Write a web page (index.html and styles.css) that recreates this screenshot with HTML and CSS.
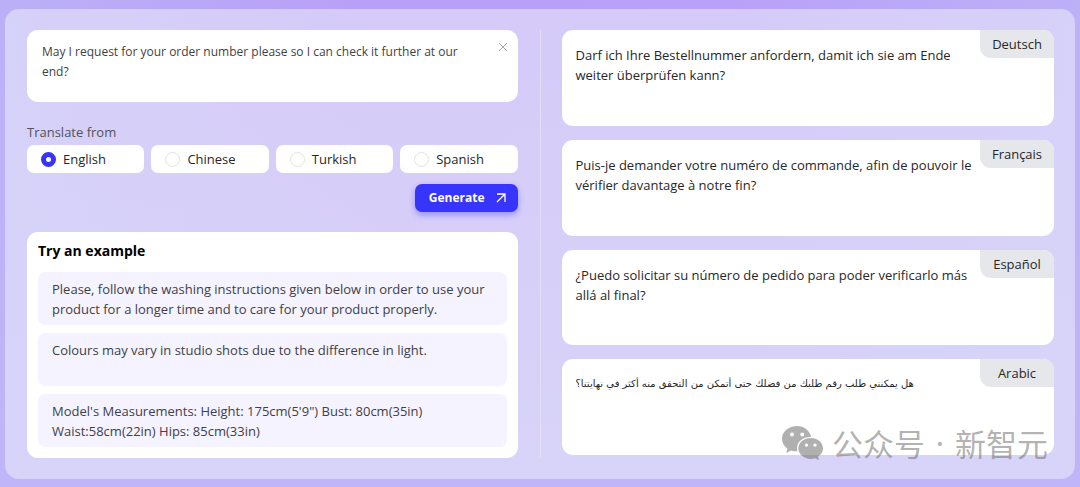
FILE: index.html
```html
<!DOCTYPE html>
<html lang="en">
<head>
<meta charset="utf-8">
<meta name="viewport" content="width=device-width, initial-scale=1">
<title>Translate</title>
<link rel="stylesheet" href="styles.css">
</head>
<body>
<main class="panel">
  <section class="source">
    <div class="prompt">
      <textarea class="prompt-text" aria-label="Text to translate">May I request for your order number please so I can check it further at our end?</textarea>
      <button class="clear" type="button" aria-label="Clear text">
        <svg viewBox="0 0 10 10" width="10" height="10"><path d="M1 1l8 8M9 1L1 9" fill="none" stroke="currentColor"/></svg>
      </button>
    </div>
    <fieldset class="languages">
      <legend>Translate from</legend>
      <div class="options">
        <label class="option"><input type="radio" name="from" checked>English</label>
        <label class="option"><input type="radio" name="from">Chinese</label>
        <label class="option"><input type="radio" name="from">Turkish</label>
        <label class="option"><input type="radio" name="from">Spanish</label>
      </div>
    </fieldset>
    <button class="generate" type="button">Generate
      <svg viewBox="0 0 10 10" width="10" height="10" aria-hidden="true"><path d="M1 1h8v8M9 1L1 9" fill="none" stroke="currentColor" stroke-width="1.3"/></svg>
    </button>
    <div class="examples">
      <h2>Try an example</h2>
      <button class="example" type="button">Please, follow the washing instructions given below in order to use your product for a longer time and to care for your product properly.</button>
      <button class="example" type="button">Colours may vary in studio shots due to the difference in light.</button>
      <button class="example" type="button">Model's Measurements: Height: 175cm(5'9") Bust: 80cm(35in) Waist:58cm(22in) Hips: 85cm(33in)</button>
    </div>
  </section>
  <section class="results">
    <article class="result">
      <p lang="de">Darf ich Ihre Bestellnummer anfordern, damit ich sie am Ende weiter überprüfen kann?</p>
      <span class="tag">Deutsch</span>
    </article>
    <article class="result">
      <p lang="fr">Puis-je demander votre numéro de commande, afin de pouvoir le vérifier davantage à notre fin?</p>
      <span class="tag">Français</span>
    </article>
    <article class="result">
      <p lang="es">¿Puedo solicitar su número de pedido para poder verificarlo más allá al final?</p>
      <span class="tag">Español</span>
    </article>
    <article class="result">
      <p class="arabic" lang="ar"><bdi dir="rtl">هل يمكنني طلب رقم طلبك من فضلك حتى أتمكن من التحقق منه أكثر في نهايتنا؟</bdi></p>
      <span class="tag">Arabic</span>
    </article>
  </section>
  <div class="watermark" lang="zh">
    <svg viewBox="0 0 42 34" width="42" height="34" aria-hidden="true">
      <path fill="currentColor" fill-rule="evenodd" d="M15 0C6.700 0 0 5.700 0 12.800c0 4.100 2.100 7.500 5.500 9.900L4.200 27l5-2.600c2 .6 3.900 1 6.300.9A11 11 0 0 1 15.100 22C15.100 15.700 21 11 28.200 11h1C27.700 4.600 22 0 15 0ZM10 6.600a2 2 0 1 1 0 4a2 2 0 0 1 0-4ZM20.300 6.600a2 2 0 1 1 0 4a2 2 0 0 1 0-4Z"/>
      <path fill="currentColor" fill-rule="evenodd" d="M28.700 12.100c-6.900 0-12.300 4.700-12.300 10.400s5.400 10.400 12.300 10.400c1.500 0 3-.3 4.300-.7l4.200 2-1.200-3.600c3.100-1.900 5-4.900 5-8.100 0-5.700-5.400-10.400-12.300-10.400ZM24.500 17.400a1.700 1.700 0 1 1 0 3.400a1.700 1.700 0 0 1 0-3.400ZM33 17.400a1.700 1.700 0 1 1 0 3.400a1.700 1.700 0 0 1 0-3.400Z"/>
    </svg>
    <span>公众号</span><span class="dot">·</span><span>新智元</span>
  </div>
</main>
</body>
</html>
```
FILE: styles.css
```css
* { box-sizing: border-box; }

body {
  margin: 0;
  min-height: 100vh;
  padding: 9px 5px 8px;
  background: linear-gradient(to bottom, rgba(192, 181, 248, 0) 0%, #c0b5f8 100%),
    linear-gradient(to right, #bbb0f7, #b89ff8 35%, #b9a1f9 68%, #bcb0f7);
  color: #27272a;
  font: 13px/20px "Open Sans", "Noto Sans", sans-serif;
}

button, textarea { font: inherit; color: inherit; border: 0; margin: 0; }
h2, p { margin: 0; }

.panel {
  position: relative;
  display: grid;
  grid-template-columns: 1fr 1fr;
  min-height: calc(100vh - 17px);
  padding: 21px 21px 21px 22px;
  border-radius: 14px;
  background: rgba(236, 235, 247, 0.56);
}

.source {
  display: flex;
  flex-direction: column;
  padding-right: 22px;
  border-right: 1px solid #e5dffc;
}

.prompt {
  display: flex;
  align-items: flex-start;
  height: 72px;
  padding: 12px 10px 8px 15px;
  border-radius: 11px;
  background: #fff;
}

.prompt-text {
  flex: 1;
  height: 52px;
  padding: 0 32px 0 0;
  resize: none;
  outline: none;
  background: none;
  overflow: hidden;
  color: #3f3f46;
  font-size: 12px;
}

.clear {
  display: flex;
  padding: 0;
  background: none;
  color: #aaa;
}

.languages { margin: 20px 0 0; padding: 0; border: 0; min-width: 0; }
.languages legend { padding: 0; margin-bottom: 3px; color: #52525b; }

.options { display: grid; grid-template-columns: repeat(4, 1fr); gap: 7px; }

.option {
  display: flex;
  align-items: center;
  gap: 7px;
  height: 28px;
  padding-left: 14px;
  border-radius: 7px;
  background: #fff;
}

.option input {
  appearance: none;
  width: 15px;
  height: 15px;
  margin: 0;
  border: 1px solid #e2e2e6;
  border-radius: 50%;
  background: #fff;
}

.option input:checked { border: 5px solid #3734fc; }

.generate {
  display: flex;
  align-items: center;
  align-self: flex-end;
  gap: 11px;
  height: 28px;
  margin: 11px 0 20px;
  padding: 0 12px 0 14px;
  border-radius: 7px;
  background: #3734fc;
  color: #fff;
  font-size: 12px;
  font-weight: 700;
  box-shadow: 0 3px 6px rgba(55, 52, 252, 0.4);
}

.examples {
  flex: 1;
  display: flex;
  flex-direction: column;
  gap: 8px;
  padding: 9px 11px 11px;
  border-radius: 11px;
  background: #fff;
}

.examples h2 { margin-bottom: 3px; font-size: 14px; line-height: 20px; color: #000; }

.example {
  flex: 1;
  display: flex;
  align-items: flex-start;
  padding: 7px 14px 6px;
  border-radius: 7px;
  background: #f5f3ff;
  color: #3f3f46;
  text-align: left;
}

.results {
  display: grid;
  grid-auto-rows: 1fr;
  gap: 14px;
  padding: 0 0 3px 21px;
}

.result {
  display: flex;
  align-items: flex-start;
  justify-content: space-between;
  border-radius: 11px;
  background: #fff;
  overflow: hidden;
}

.result p { flex: 1; padding: 15px 2px 0 14px; }
.result .arabic { font: 10px/20px "DejaVu Sans", sans-serif; }

.tag {
  flex: none;
  width: 74px;
  height: 28px;
  border-bottom-left-radius: 11px;
  background: #e5e7eb;
  line-height: 28px;
  text-align: center;
}

.watermark {
  position: absolute;
  right: 27px;
  bottom: 18px;
  display: flex;
  align-items: center;
  gap: 8px;
  color: rgba(112, 112, 112, 0.55);
  font: 31px/36px "Noto Sans CJK SC", sans-serif;
  pointer-events: none;
}

.dot { width: 14px; font-family: "Noto Sans", sans-serif; text-align: center; }
```
